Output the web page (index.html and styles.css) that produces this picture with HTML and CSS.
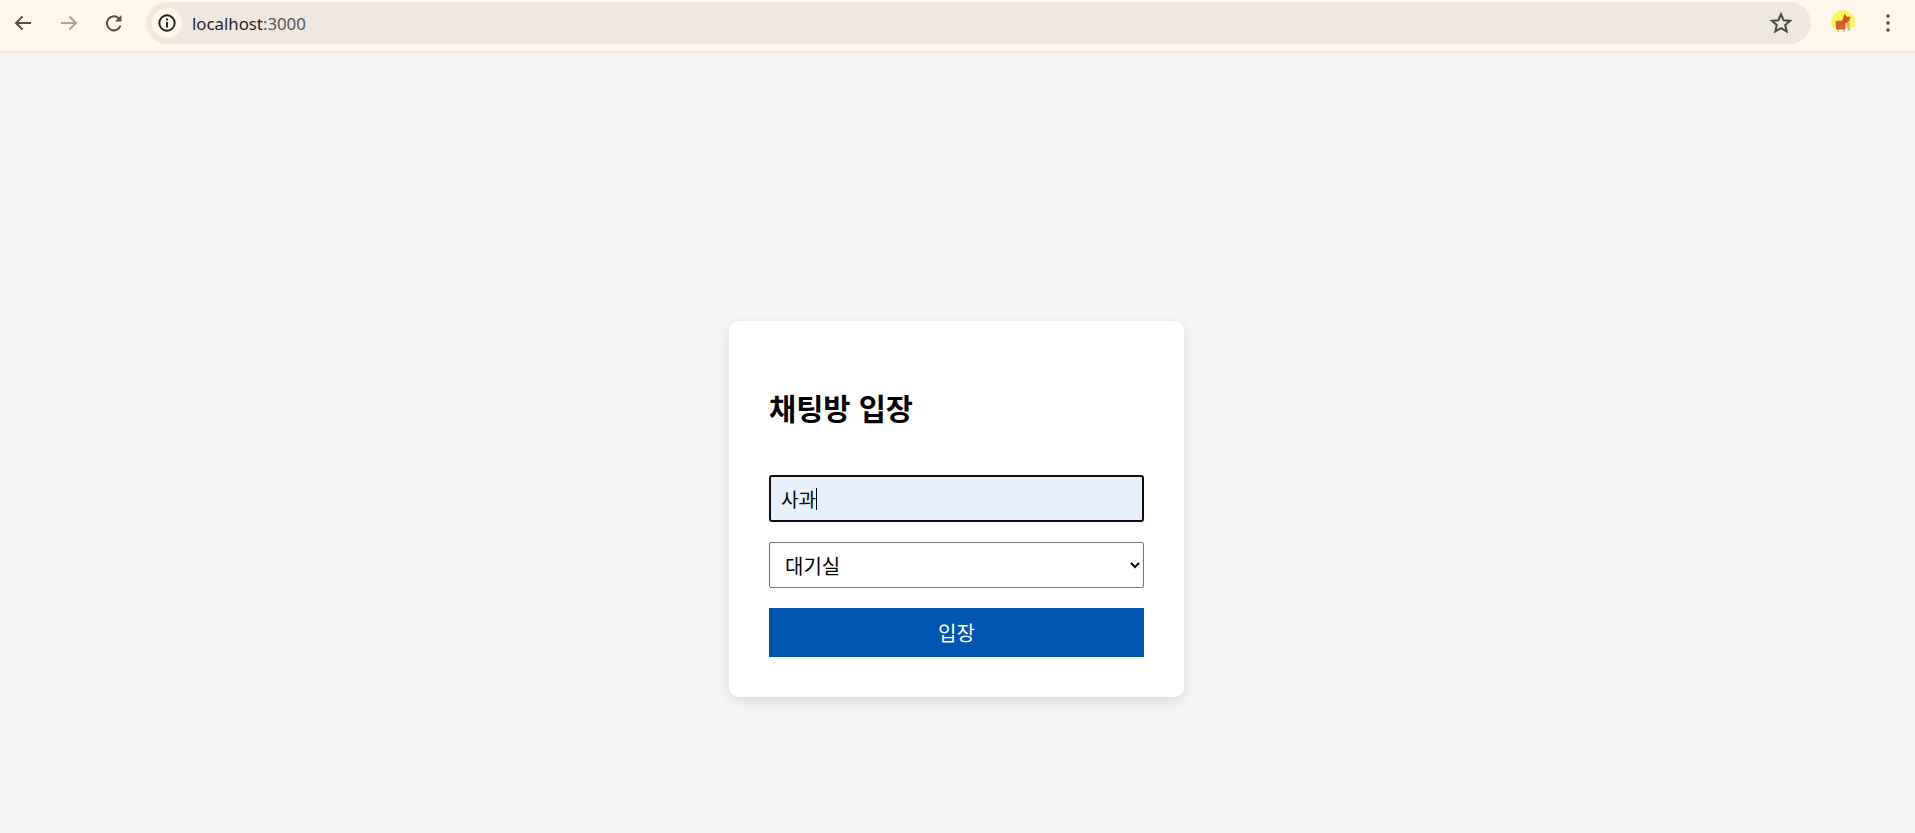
FILE: index.html
```html
<!DOCTYPE html>
<html lang="ko">
<head>
<meta charset="utf-8">
<title>채팅방 입장</title>
<link rel="stylesheet" href="styles.css">
</head>
<body>
<header class="toolbar">
  <svg class="nav back" viewBox="0 0 24 24"><path d="M20 12H5M11.5 5.5 5 12l6.500 6.500"/></svg>
  <svg class="nav forward" viewBox="0 0 24 24"><path d="M4 12h15M12.500 5.500 19 12l-6.500 6.500"/></svg>
  <svg class="nav reload" viewBox="0 0 24 24"><path d="M18.600 14.500A7 7 0 1 1 17 7.500"/><path class="solid" d="M19.500 4v6.500h-6.500z"/></svg>
  <div class="omnibox">
    <span class="site-chip">
      <svg class="info" viewBox="0 0 20 20"><circle cx="10" cy="10" r="7.700"/><path d="M10 9v5.500"/><path d="M10 5.500v2"/></svg>
    </span>
    <span class="url">localhost<span class="port">:3000</span></span>
    <svg class="star" viewBox="0 0 24 24"><path d="M12 3.200l2.600 6 6.500.6-4.900 4.300 1.500 6.400L12 17.100l-5.700 3.400 1.500-6.400-4.900-4.300 6.500-.6z"/></svg>
  </div>
  <svg class="avatar" viewBox="0 0 24 24">
    <circle cx="12" cy="12" r="12" fill="#fdf45c"/>
    <path d="M1.500 18h21a12 12 0 0 1-21 0z" fill="#fdfbe6"/>
    <path d="M6 19h2v3H6zM12 19h2v3h-2z" fill="#e8c9a0"/>
    <path d="M15 12h3.500l1 8.500H17z" fill="#d8b48c"/>
    <path d="M4.500 11 11.500 10.500l3 .5v8.500H5z" fill="#d9602a"/>
    <path d="M11.500 10 13.500 3.500 16 7l3.500-.5-1 4-2 2-3 .5z" fill="#d9532a"/>
  </svg>
  <svg class="menu" viewBox="0 0 4 18"><circle cx="2" cy="2" r="1.800"/><circle cx="2" cy="9" r="1.800"/><circle cx="2" cy="16" r="1.800"/></svg>
</header>
<main class="page">
  <section class="card">
    <h1 class="title">채팅방 입장</h1>
    <div class="name-field"><span>사과</span><i class="caret"></i></div>
    <select class="room-select">
      <option>대기실</option>
    </select>
    <button class="enter" type="button">입장</button>
  </section>
</main>
</body>
</html>
```
FILE: styles.css
```css
* { box-sizing: border-box; }
html, body { height: 100%; }
body {
  margin: 0;
  display: flex;
  flex-direction: column;
  overflow: hidden;
  background: #f4f4f4;
  font-family: "Noto Sans CJK KR", "Liberation Sans", sans-serif;
  color: #000;
}
.toolbar {
  flex: none;
  height: 53px;
  display: flex;
  align-items: flex-start;
  background: #fff8ea;
  border-bottom: 2px solid #efe4d2;
  padding: 2px 0 0 11px;
}
.nav {
  flex: none;
  width: 24px;
  height: 24px;
  margin-top: 9px;
  fill: none;
  stroke: #575140;
  stroke-width: 2;
}
.forward { margin-left: 22px; stroke: #a8a498; }
.reload { margin-left: 21px; }
.solid { fill: #575140; stroke: none; }
.omnibox {
  flex: none;
  width: 1665px;
  height: 42px;
  margin-left: 20px;
  border-radius: 21px;
  background: #efe8e1;
  display: flex;
  align-items: center;
  padding: 0 18px 0 6px;
}
.site-chip {
  width: 30px;
  height: 30px;
  border-radius: 50%;
  background: #fff8ea;
  display: flex;
  align-items: center;
  justify-content: center;
}
.info {
  width: 20px;
  height: 20px;
  fill: none;
  stroke: #1f1f1f;
  stroke-width: 1.900;
}
.url {
  margin-left: 10px;
  flex: 1;
  font-family: "Noto Sans", "Liberation Sans", sans-serif;
  font-size: 16.800px;
  color: #1f1f1f;
}
.port { color: #555; }
.star {
  width: 24px;
  height: 24px;
  fill: none;
  stroke: #4a473f;
  stroke-width: 2;
}
.avatar {
  flex: none;
  width: 24px;
  height: 24px;
  margin: 8px 0 0 20px;
  border-radius: 50%;
}
.menu {
  flex: none;
  width: 4px;
  height: 18px;
  margin: 12px 0 0 31px;
  fill: #4d4837;
}
.page {
  flex: 1;
  display: flex;
  justify-content: center;
  align-items: flex-start;
  padding: 268px 2px 0 0;
}
.card {
  width: 455px;
  height: 376px;
  padding: 40px;
  display: flex;
  flex-direction: column;
  background: #fff;
  border-radius: 10px;
  box-shadow: 0 4px 12px rgba(0, 0, 0, 0.1);
}
.title {
  margin: 28px 0 0;
  font-size: 29.500px;
  line-height: 36px;
  font-weight: 700;
}
.name-field {
  height: 47px;
  margin-top: 50px;
  display: flex;
  align-items: center;
  padding-left: 10px;
  background: #e8f0fe;
  border: 2px solid #101010;
  border-radius: 3px;
  font-size: 19px;
}
.caret {
  width: 1px;
  height: 22px;
  background: #000;
}
.room-select {
  width: 100%;
  height: 46px;
  margin-top: 20px;
  padding: 0 11px;
  background: #fff;
  border: 1px solid #767676;
  border-radius: 2px;
  font-family: inherit;
  font-size: 20px;
  color: #000;
}
.enter {
  width: 100%;
  height: 49px;
  margin-top: 20px;
  border: 0;
  background: #0056b3;
  color: #fff;
  font-family: inherit;
  font-size: 20px;
}
```
